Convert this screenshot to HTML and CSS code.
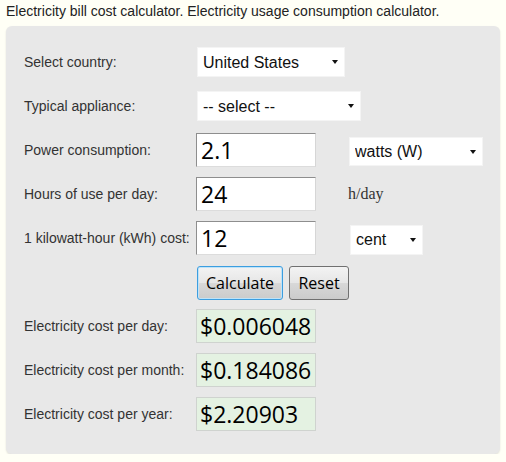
FILE: index.html
```html
<!DOCTYPE html>
<html lang="en">
<head>
<meta charset="utf-8">
<title>Electricity bill cost calculator</title>
<link rel="stylesheet" href="styles.css">
</head>
<body>
<p class="intro">Electricity bill cost calculator. Electricity usage consumption calculator.</p>
<form class="calc">
  <label class="lbl" for="country">Select country:</label>
  <div class="sel sel-country"><select id="country"><option>United States</option></select></div>
  <span></span>

  <label class="lbl" for="appliance">Typical appliance:</label>
  <div class="sel sel-appliance"><select id="appliance"><option>-- select --</option></select></div>
  <span></span>

  <label class="lbl" for="power">Power consumption:</label>
  <input class="num" id="power" type="text" value="2.1">
  <div class="sel sel-unit"><select><option>watts (W)</option></select></div>

  <label class="lbl" for="hours">Hours of use per day:</label>
  <input class="num" id="hours" type="text" value="24">
  <span class="unit">h/day</span>

  <label class="lbl" for="cost">1 kilowatt-hour (kWh) cost:</label>
  <input class="num" id="cost" type="text" value="12">
  <div class="sel sel-cent"><select><option>cent</option></select></div>

  <span></span>
  <div class="buttons">
    <button type="button" class="btn btn-primary">Calculate</button>
    <button type="reset" class="btn btn-reset">Reset</button>
  </div>
  <span></span>

  <span class="lbl">Electricity cost per day:</span>
  <output class="result">$0.006048</output>
  <span></span>

  <span class="lbl">Electricity cost per month:</span>
  <output class="result">$0.184086</output>
  <span></span>

  <span class="lbl">Electricity cost per year:</span>
  <output class="result">$2.20903</output>
  <span></span>
</form>
</body>
</html>
```
FILE: styles.css
```css
html, body {
  margin: 0;
  padding: 0;
  background: #fffff6;
}

body {
  padding: 0 6px;
  font-family: "Liberation Sans", Arial, sans-serif;
  color: #222;
}

.intro {
  margin: 0;
  padding-top: 3px;
  height: 23px;
  font-size: 14px;
  line-height: 16px;
}

.calc {
  width: 494px;
  box-sizing: border-box;
  background: #e8e8e8;
  border-radius: 6px;
  box-shadow: 0 1px 2px rgba(0, 0, 0, 0.12);
  padding: 14px 0 18px 18px;
  display: grid;
  grid-template-columns: 172px 153px auto;
  grid-auto-rows: 44px;
  align-items: center;
}

.lbl {
  font-size: 14px;
  color: #333;
  white-space: nowrap;
}

/* white select boxes with a small black arrow */
.sel {
  position: relative;
  height: 30px;
  margin-left: 1px;
}

.sel select {
  appearance: none;
  -webkit-appearance: none;
  width: 100%;
  height: 100%;
  border: 1px solid #f4f4f4;
  border-radius: 0;
  background: #fff;
  font-family: "Liberation Sans", Arial, sans-serif;
  font-size: 16px;
  color: #111;
  padding: 0 0 0 5px;
  outline: none;
}

.sel::after {
  content: "";
  position: absolute;
  right: 7px;
  top: 50%;
  margin-top: -2px;
  border-left: 3.5px solid transparent;
  border-right: 3.5px solid transparent;
  border-top: 4px solid #111;
}

.sel-country { width: 148px; }
.sel-appliance { width: 164px; }
.sel-unit { width: 134px; height: 29px; margin-top: 3px; margin-left: 0; }
.sel-cent { width: 73px; margin-top: 3px; margin-left: 1px; }

.num {
  box-sizing: border-box;
  width: 120px;
  height: 34px;
  margin: 0;
  border: 1px solid #8e8e8e;
  border-right-color: #d6d6d6;
  border-bottom-color: #dcdcdc;
  background: #fff;
  font-family: "Open Sans", "Noto Sans", sans-serif;
  font-size: 23px;
  color: #000;
  padding: 0 4px;
  outline: none;
}

.unit {
  font-family: "Liberation Serif", "Times New Roman", serif;
  font-size: 16px;
  color: #333;
  margin-left: -1px;
}

.buttons {
  display: flex;
  gap: 6px;
  margin-left: 1px;
  margin-top: 2px;
}

.btn {
  height: 34px;
  padding: 0 8px;
  border: 1px solid #707070;
  border-radius: 3px;
  background: linear-gradient(#f3f3f3, #e6e6e6 50%, #d8d8d8 51%, #cbcbcb);
  font-family: "Open Sans", "Noto Sans", sans-serif;
  font-size: 16px;
  color: #000;
}

.btn-primary {
  width: 86px;
  border-color: #3c9ee0;
  box-shadow: inset 0 0 0 1px #bfe3f8;
}

.btn-reset { width: 60px; }

.result {
  box-sizing: border-box;
  display: block;
  width: 120px;
  height: 34px;
  border: 1px solid #cfd3cf;
  background: #e4f2e2;
  font-family: "Open Sans", "Noto Sans", sans-serif;
  font-size: 23px;
  line-height: 32px;
  color: #000;
  padding: 0 3px;
}
```
